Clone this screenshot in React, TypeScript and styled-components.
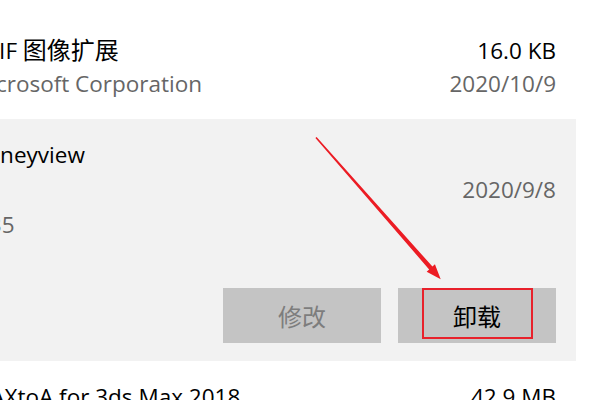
import React from "react";
import styled, { createGlobalStyle } from "styled-components";

const Global = createGlobalStyle`
  html, body { margin: 0; padding: 0; background: #ffffff; }
  body {
    width: 600px;
    height: 400px;
    overflow: hidden;
    font-family: "Open Sans", "Noto Sans CJK SC", sans-serif;
  }
`;

const Viewport = styled.div`
  position: relative;
  width: 600px;
  height: 400px;
  overflow: hidden;
  background: #ffffff;
`;

const List = styled.div`
  display: flex;
  flex-direction: column;
  width: 606px;
  margin-left: -30px;
  padding-top: 13px;
`;

const Item = styled.div<{ $selected?: boolean }>`
  display: flex;
  flex-direction: column;
  padding: 18px 20px 18px 0;
  background: ${(p) => (p.$selected ? "#f2f2f2" : "#ffffff")};
`;

const Line = styled.div`
  display: flex;
  justify-content: space-between;
  align-items: baseline;
  height: 35px;
  line-height: 35px;
  font-size: 22.5px;
  white-space: nowrap;
`;

const Primary = styled.span`
  color: #000000;
`;

const Secondary = styled.span`
  color: #666666;
`;

const Cjk = styled.span`
  font-family: "Noto Sans CJK SC", sans-serif;
  font-size: 24px;
`;

const Actions = styled.div`
  display: flex;
  justify-content: flex-end;
  gap: 17px;
  margin-top: 46px;
`;

const Button = styled.div<{ $disabled?: boolean }>`
  display: flex;
  align-items: center;
  justify-content: center;
  width: 158px;
  height: 55px;
  background: #c4c4c4;
  color: ${(p) => (p.$disabled ? "#7d7d7d" : "#000000")};
  font-family: "Noto Sans CJK SC", sans-serif;
  font-size: 24px;
`;

const Highlight = styled.div`
  position: absolute;
  left: 422px;
  top: 288px;
  width: 111px;
  height: 51px;
  box-sizing: border-box;
  border: 2px solid #e8212b;
`;

const ArrowLayer = styled.svg`
  position: absolute;
  left: 0;
  top: 0;
  pointer-events: none;
`;

export default function App() {
  return (
    <Viewport>
      <Global />
      <List>
        <Item>
          <Line>
            <Primary>
              HEIF <Cjk>图像扩展</Cjk>
            </Primary>
            <Primary>16.0 KB</Primary>
          </Line>
          <Line>
            <Secondary>Microsoft Corporation</Secondary>
            <Secondary>2020/10/9</Secondary>
          </Line>
        </Item>
        <Item $selected>
          <Line>
            <Primary>Honeyview</Primary>
          </Line>
          <Line>
            <Secondary />
            <Secondary>2020/9/8</Secondary>
          </Line>
          <Line>
            <Secondary>5.35</Secondary>
          </Line>
          <Actions>
            <Button $disabled>修改</Button>
            <Button>卸载</Button>
          </Actions>
        </Item>
        <Item>
          <Line>
            <Primary>MAXtoA for 3ds Max 2018</Primary>
            <Primary>42.9 MB</Primary>
          </Line>
        </Item>
      </List>
      <Highlight />
      <ArrowLayer width="600" height="400" viewBox="0 0 600 400">
        <polygon
          points="315.4,138 429.15,269.45 426.67,271.64 440.7,279.3 434.93,264.36 432.45,266.55 316.6,137"
          fill="#ec1c24"
        />
      </ArrowLayer>
    </Viewport>
  );
}
